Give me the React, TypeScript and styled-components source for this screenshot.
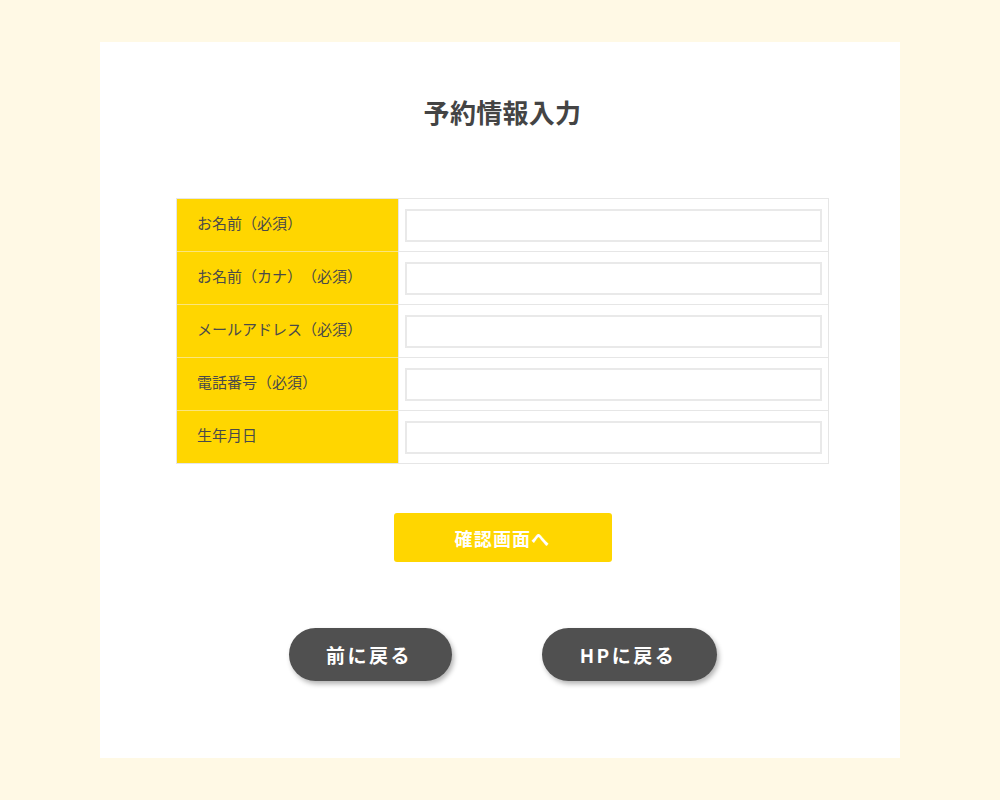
import React from "react";
import styled, { createGlobalStyle } from "styled-components";

const Global = createGlobalStyle`
  html, body { margin: 0; padding: 0; }
  body {
    background: #fff9e5;
    font-family: "Noto Sans CJK JP", "Noto Sans", sans-serif;
    color: #444;
    text-spacing-trim: space-all;
  }
`;

const Page = styled.div`
  padding: 42px 0 42px;
  display: flex;
  justify-content: center;
`;

const Card = styled.main`
  width: 800px;
  box-sizing: border-box;
  background: #fff;
  padding: 50px 71px 77px 76px;
  display: flex;
  flex-direction: column;
  align-items: center;
`;

const Title = styled.h1`
  margin: 0 0 66px;
  font-size: 26px;
  line-height: 40px;
  font-weight: 700;
  color: #444;
  letter-spacing: 0.3px;
`;

const Table = styled.table`
  width: 653px;
  border-collapse: collapse;
  border: 1px solid #e6e6e6;
`;

const Row = styled.tr`
  height: 53px;
`;

const Label = styled.th`
  width: 222px;
  box-sizing: border-box;
  background: #ffd600;
  text-align: left;
  font-weight: 400;
  font-size: 15px;
  color: #4a4a4a;
  padding: 0 0 6px 20px;
  text-spacing-trim: space-all;
  border-top: 1px solid #fbe57c;
  border-left: 1px solid #e6e6e6;
  tr:first-child > & { border-top: 1px solid #e6e6e6; }
`;

const Cell = styled.td`
  padding: 0 6px 0 6px;
  border: 1px solid #e6e6e6;
`;

const Input = styled.input`
  display: block;
  width: 100%;
  height: 33px;
  box-sizing: border-box;
  border: 2px solid #e9e9e9;
  background: #fff;
  font-size: 14px;
  padding: 0 8px;
  outline: none;
`;

const Submit = styled.button`
  margin-top: 49px;
  width: 218px;
  height: 49px;
  border: none;
  border-radius: 3px;
  background: #ffd600;
  color: #fff;
  font-family: inherit;
  font-size: 18px;
  font-weight: 700;
  letter-spacing: 1.2px;
  cursor: pointer;
`;

const BackRow = styled.div`
  margin-top: 66px;
  display: flex;
  gap: 90px;
`;

const BackButton = styled.button<{ $w: number }>`
  width: ${(p) => p.$w}px;
  height: 53px;
  border: none;
  border-radius: 27px;
  background: #505050;
  color: #fff;
  font-family: inherit;
  font-size: 19px;
  font-weight: 700;
  letter-spacing: 2.5px;
  padding-left: 4px;
  box-shadow: 2px 3px 5px rgba(0, 0, 0, 0.3);
  cursor: pointer;
`;

const fields = [
  "お名前（必須）",
  "お名前（カナ）（必須）",
  "メールアドレス（必須）",
  "電話番号（必須）",
  "生年月日",
];

export default function App() {
  return (
    <>
      <Global />
      <Page>
        <Card>
          <Title>予約情報入力</Title>
          <Table>
            <tbody>
              {fields.map((f) => (
                <Row key={f}>
                  <Label>{f}</Label>
                  <Cell>
                    <Input type="text" />
                  </Cell>
                </Row>
              ))}
            </tbody>
          </Table>
          <Submit>確認画面へ</Submit>
          <BackRow>
            <BackButton $w={163}>前に戻る</BackButton>
            <BackButton $w={175}>HPに戻る</BackButton>
          </BackRow>
        </Card>
      </Page>
    </>
  );
}
